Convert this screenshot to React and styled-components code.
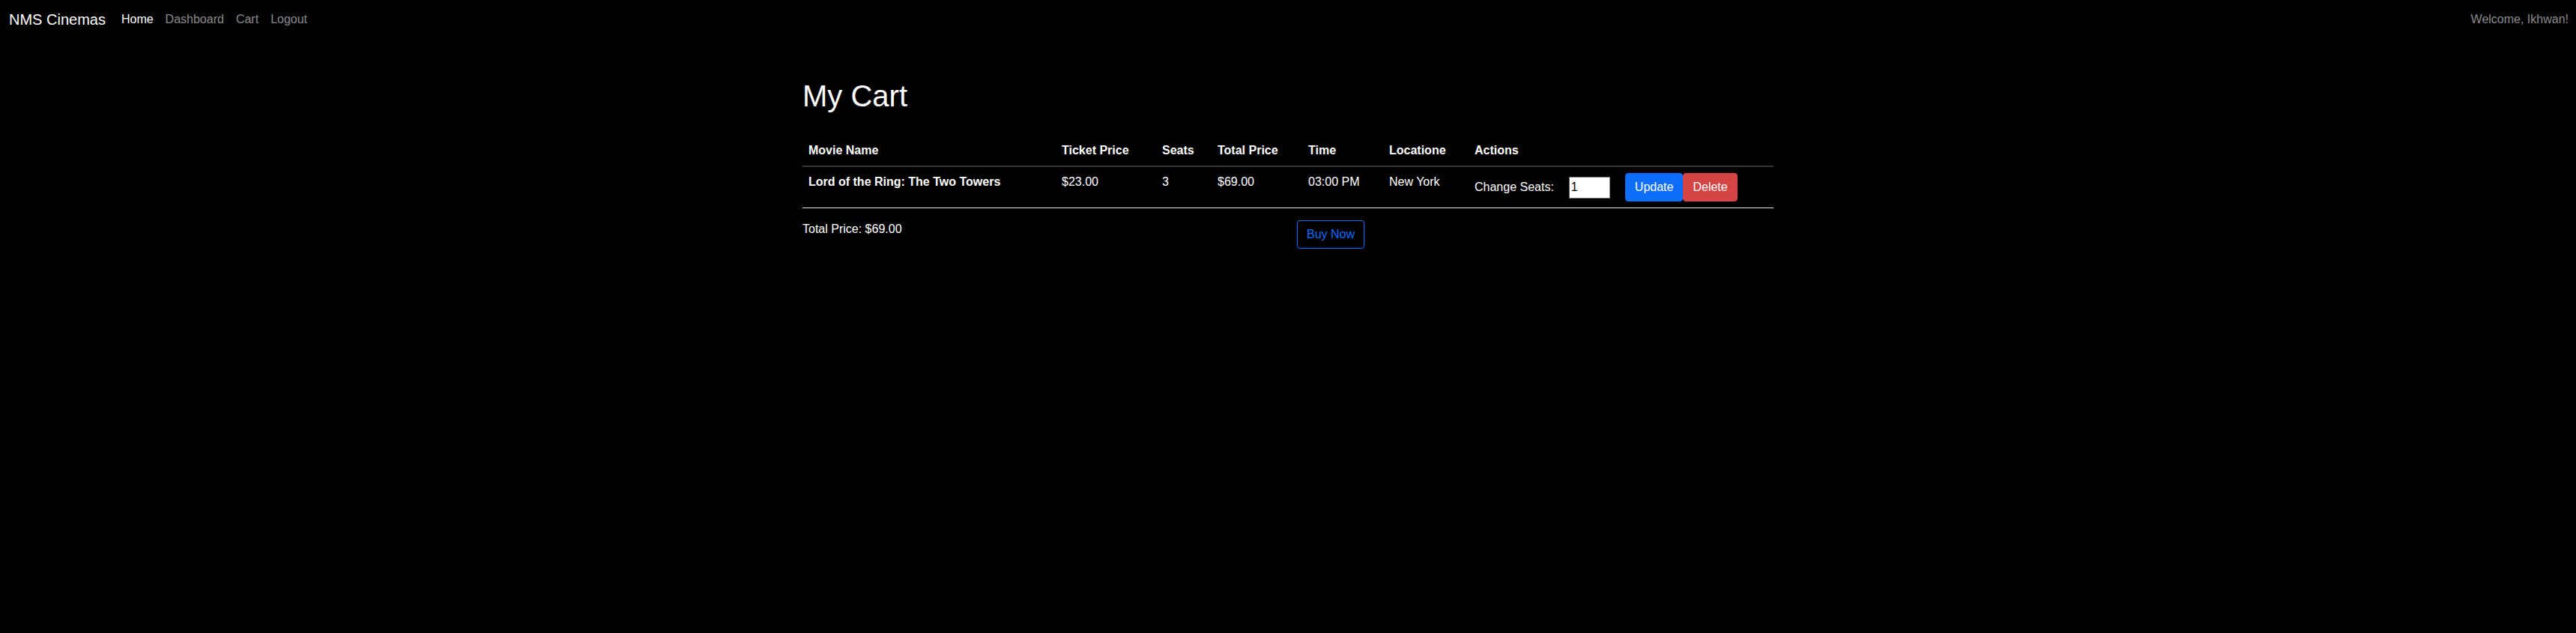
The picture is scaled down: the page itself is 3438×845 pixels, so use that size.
import React, { useState } from "react";
import styled, { createGlobalStyle } from "styled-components";

const GlobalStyle = createGlobalStyle`
  * { box-sizing: border-box; }
  body {
    margin: 0;
    background: #000;
    color: #fff;
    font-family: "Liberation Sans", Arial, sans-serif;
    font-size: 16px;
    line-height: 1.5;
  }
`;

const cartItems = [
  {
    id: 1,
    movie: "Lord of the Ring: The Two Towers",
    ticketPrice: 23,
    seats: 3,
    time: "03:00 PM",
    location: "New York"
  }
];

const columns = [
  { label: "Movie Name", width: 338 },
  { label: "Ticket Price", width: 134 },
  { label: "Seats", width: 74 },
  { label: "Total Price", width: 121 },
  { label: "Time", width: 108 },
  { label: "Locatione", width: 114 },
  { label: "Actions", width: 407 }
];

const money = n => "$" + n.toFixed(2);

function App() {
  const [seats, setSeats] = useState({ 1: "1" });

  const total = cartItems.reduce((sum, row) => sum + row.ticketPrice * row.seats, 0);

  return (
    <>
      <GlobalStyle />
      <Navbar>
        <NavLeft>
          <Brand href="#">NMS Cinemas</Brand>
          <NavLink href="#" active>Home</NavLink>
          <NavLink href="#">Dashboard</NavLink>
          <NavLink href="#">Cart</NavLink>
          <NavLink href="#">Logout</NavLink>
        </NavLeft>
        <NavText>Welcome, Ikhwan!</NavText>
      </Navbar>

      <Container>
        <Title>My Cart</Title>
        <Table>
          <colgroup>
            {columns.map(col => (
              <col key={col.label} style={{ width: col.width }} />
            ))}
          </colgroup>
          <thead>
            <tr>
              {columns.map(col => (
                <Th key={col.label}>{col.label}</Th>
              ))}
            </tr>
          </thead>
          <tbody>
            {cartItems.map(row => (
              <tr key={row.id}>
                <Td bold>{row.movie}</Td>
                <Td>{money(row.ticketPrice)}</Td>
                <Td>{row.seats}</Td>
                <Td>{money(row.ticketPrice * row.seats)}</Td>
                <Td>{row.time}</Td>
                <Td>{row.location}</Td>
                <Td>
                  <SeatForm>
                    <label>Change Seats:</label>
                    <SeatInput
                      type="text"
                      value={seats[row.id]}
                      onChange={e => setSeats({ ...seats, [row.id]: e.target.value })}
                    />
                    <ButtonGroup>
                      <Button variant="primary">Update</Button>
                      <Button variant="danger">Delete</Button>
                    </ButtonGroup>
                  </SeatForm>
                </Td>
              </tr>
            ))}
          </tbody>
        </Table>

        <Row>
          <Col>
            <p>Total Price: {money(total)}</p>
          </Col>
          <Col>
            <Button variant="outline">Buy Now</Button>
          </Col>
        </Row>
      </Container>
    </>
  );
}

export default App;

const Navbar = styled.nav`
  display: flex;
  align-items: center;
  justify-content: space-between;
  height: 56px;
  padding: 6px 10px 10px 12px;
`;

const NavLeft = styled.div`
  display: flex;
  align-items: center;
`;

const Brand = styled.a`
  color: #fff;
  font-size: 20px;
  line-height: 30px;
  padding: 5px 0;
  margin-right: 13px;
  text-decoration: none;
`;

const NavLink = styled.a`
  color: ${p => (p.active ? "#fff" : "rgba(255, 255, 255, 0.55)")};
  padding: 8px;
  text-decoration: none;
`;

const NavText = styled.span`
  color: rgba(255, 255, 255, 0.55);
`;

const Container = styled.div`
  max-width: 1320px;
  margin: 0 auto;
  padding: 48px 12px 0;
`;

const Title = styled.h1`
  font-size: 40px;
  font-weight: 500;
  line-height: 1.2;
  margin: 0 0 29px;
`;

const Table = styled.table`
  width: 100%;
  table-layout: fixed;
  border-collapse: collapse;
  margin-bottom: 16px;
  vertical-align: top;
`;

const Th = styled.th`
  text-align: left;
  font-weight: 700;
  padding: 8px;
  border-bottom: 2px solid #33363b;
`;

const Td = styled.td`
  padding: 8px;
  font-weight: ${p => (p.bold ? 700 : 400)};
  border-bottom: 1px solid #e6e6e6;
  vertical-align: top;
`;

const SeatForm = styled.div`
  display: flex;
  align-items: center;
  gap: 20px;
`;

const SeatInput = styled.input`
  width: 55px;
  height: 29px;
  padding: 1px 2px;
  border: 1px solid #767676;
  background: #fff;
  color: #000;
  font-family: "Liberation Sans", Arial, sans-serif;
  font-size: 16px;
`;

const ButtonGroup = styled.div`
  display: flex;
`;

const variants = {
  primary: { bg: "#0d6efd", border: "#0d6efd", color: "#fff" },
  danger: { bg: "#d64545", border: "#d64545", color: "#fff" },
  outline: { bg: "transparent", border: "#0d6efd", color: "#0d6efd" }
};

const Button = styled.button`
  height: 38px;
  padding: 6px 12px;
  font-family: "Liberation Sans", Arial, sans-serif;
  font-size: 16px;
  line-height: 24px;
  border-radius: 4px;
  border: 1px solid ${p => variants[p.variant].border};
  background: ${p => variants[p.variant].bg};
  color: ${p => variants[p.variant].color};
  cursor: pointer;
`;

const Row = styled.div`
  display: flex;
  margin: 0 -12px;
`;

const Col = styled.div`
  flex: 1 0 0;
  padding: 0 12px;

  p {
    margin: 0 0 16px;
  }
`;
